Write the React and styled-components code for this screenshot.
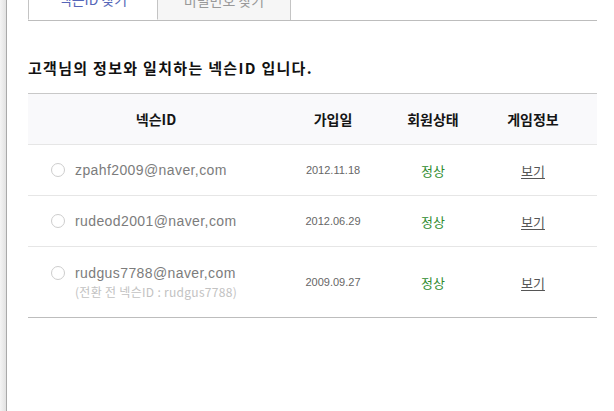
import styled, { createGlobalStyle } from "styled-components";

const GlobalStyle = createGlobalStyle`
  html, body {
    margin: 0;
    padding: 0;
    background: #fff;
  }
  body {
    font-family: "Liberation Sans", "Noto Sans CJK KR", sans-serif;
    color: #333;
  }
`;

const Page = styled.div`
  display: flex;
  min-height: 411px;
  overflow: hidden;
`;

const Edge = styled.div`
  width: 6px;
  flex-shrink: 0;
  background: linear-gradient(to right, #f4f4f4, #e2e2e2);
  border-right: 1px solid #a9a9a9;
`;

const Main = styled.div`
  width: 569px;
  padding-left: 21px;
`;

const Tabs = styled.div`
  display: flex;
  margin-top: -22px;
  border-bottom: 1px solid #bdbdbd;
`;

const Tab = styled.div`
  width: ${({ $w }) => $w}px;
  height: 42px;
  box-sizing: border-box;
  display: flex;
  align-items: center;
  justify-content: center;
  font-family: "Noto Sans CJK KR", sans-serif;
  font-size: 14px;
  border: 1px solid #c4c4c4;
  border-left-width: ${({ $active }) => ($active ? 1 : 0)}px;
  margin-bottom: ${({ $active }) => ($active ? -1 : 0)}px;
  border-bottom: ${({ $active }) => ($active ? "1px solid #fff" : "none")};
  background: ${({ $active }) => ($active ? "#fff" : "#f6f6f6")};
  color: ${({ $active }) => ($active ? "#5566b8" : "#999")};
`;

const Title = styled.h2`
  margin: 37px 0 0;
  font-family: "Noto Sans CJK KR", sans-serif;
  font-size: 15px;
  font-weight: bold;
  letter-spacing: 1.3px;
  line-height: 20px;
  color: #111;
`;

const Table = styled.div`
  margin-top: 15px;
  border-top: 1px solid #c8c8c8;
  border-bottom: 1px solid #bdbdbd;
`;

const Row = styled.div`
  display: grid;
  grid-template-columns: 256px 98px 102px 98px 15px;
  align-items: center;
  height: ${({ $h }) => $h}px;
  background: ${({ $head }) => ($head ? "#f9f9fb" : "#fff")};
  & + & {
    border-top: 1px solid #e6e6e6;
  }
`;

const HeadCell = styled.div`
  text-align: center;
  font-family: "Noto Sans CJK KR", sans-serif;
  font-size: 14px;
  font-weight: bold;
  color: #151515;
`;

const IdCell = styled.label`
  display: flex;
  align-items: flex-start;
  gap: 10px;
  padding-left: 23px;
`;

const Radio = styled.span`
  width: 14px;
  height: 14px;
  margin-top: 1px;
  box-sizing: border-box;
  border: 1px solid #cdcdcd;
  border-radius: 50%;
  background: #fff;
  flex-shrink: 0;
`;

const IdText = styled.div`
  display: flex;
  flex-direction: column;
  gap: 4px;
`;

const Email = styled.span`
  font-size: 14px;
  letter-spacing: 0.4px;
  line-height: 16px;
  color: #7c7c7c;
`;

const Note = styled.span`
  font-family: "Noto Sans CJK KR", "Liberation Sans", sans-serif;
  font-size: 12px;
  letter-spacing: 0.3px;
  line-height: 14px;
  color: #c2c2c2;
`;

const Cell = styled.div`
  text-align: center;
  font-size: ${({ $size }) => $size || 12}px;
  color: ${({ $color }) => $color || "#666"};
  font-family: ${({ $kr }) =>
    $kr ? '"Noto Sans CJK KR", sans-serif' : '"Liberation Sans", sans-serif'};
`;

const ViewLink = styled.a`
  color: #555;
  text-decoration: underline;
  text-underline-offset: 2px;
  cursor: pointer;
`;

const accounts = [
  { id: "zpahf2009@naver,com", date: "2012.11.18" },
  { id: "rudeod2001@naver,com", date: "2012.06.29" },
  {
    id: "rudgus7788@naver,com",
    date: "2009.09.27",
    note: "(전환 전 넥슨ID : rudgus7788)",
  },
];

const App = () => {
  return (
    <>
      <GlobalStyle />
      <Page>
        <Edge />
        <Main>
          <Tabs>
            <Tab $active $w={130}>넥슨ID 찾기</Tab>
            <Tab $w={133}>비밀번호 찾기</Tab>
          </Tabs>

          <Title>고객님의 정보와 일치하는 넥슨ID 입니다.</Title>

          <Table>
            <Row $head $h={50}>
              <HeadCell>넥슨ID</HeadCell>
              <HeadCell>가입일</HeadCell>
              <HeadCell>회원상태</HeadCell>
              <HeadCell>게임정보</HeadCell>
            </Row>
            {accounts.map((a) => (
              <Row key={a.id} $h={a.note ? 70 : 50}>
                <IdCell>
                  <Radio />
                  <IdText>
                    <Email>{a.id}</Email>
                    {a.note && <Note>{a.note}</Note>}
                  </IdText>
                </IdCell>
                <Cell $size={11}>{a.date}</Cell>
                <Cell $kr $size={13} $color="#2e8b2e">정상</Cell>
                <Cell $kr $size={13}>
                  <ViewLink>보기</ViewLink>
                </Cell>
              </Row>
            ))}
          </Table>
        </Main>
      </Page>
    </>
  );
};

export default App;
